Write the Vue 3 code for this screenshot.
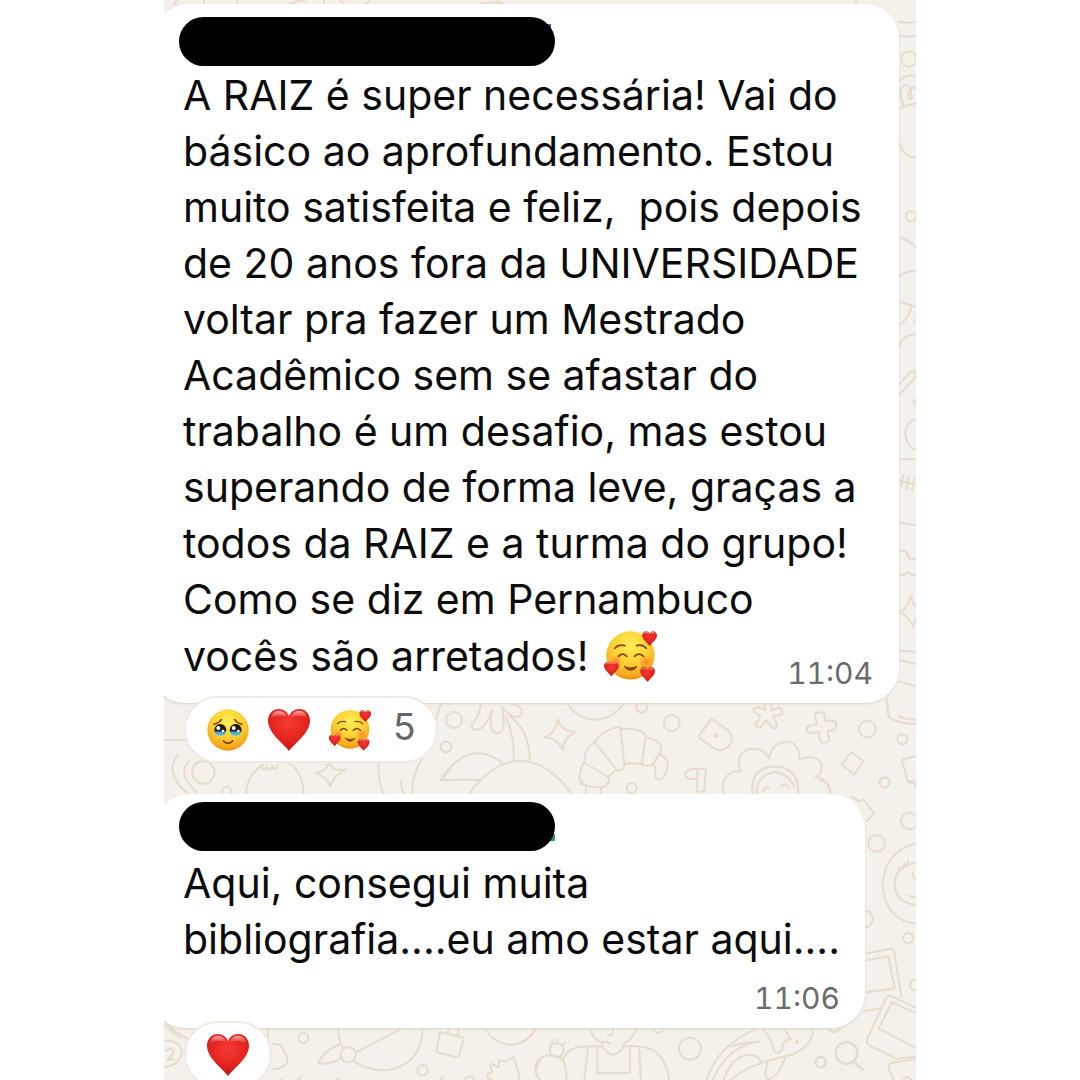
<script setup>
const messages = [
  {
    id: 'raiz',
    accent: 'blue',
    lines: [
      'A RAIZ é super necessária! Vai do',
      'básico ao aprofundamento. Estou',
      'muito satisfeita e feliz,  pois depois',
      'de 20 anos fora da UNIVERSIDADE',
      'voltar pra fazer um Mestrado',
      'Acadêmico sem se afastar do',
      'trabalho é um desafio, mas estou',
      'superando de forma leve, graças a',
      'todos da RAIZ e a turma do grupo!',
      'Como se diz em Pernambuco',
      'vocês são arretados!'
    ],
    ending: 'loved',
    time: '11:04',
    reactions: ['pleading', 'heart', 'loved'],
    count: 5
  },
  {
    id: 'aqui',
    accent: 'green',
    lines: ['Aqui, consegui muita', 'bibliografia....eu amo estar aqui....'],
    time: '11:06',
    reactions: ['heart']
  }
]

const labels = {
  pleading: 'Rosto suplicante',
  heart: 'Coração vermelho',
  loved: 'Rosto sorridente com corações'
}
</script>

<template>
  <div class="page">
    <svg class="defs" aria-hidden="true">
      <defs>
        <radialGradient id="skin" cx="0.5" cy="0.3" r="0.72">
          <stop offset="0" stop-color="#ffee55" />
          <stop offset="0.5" stop-color="#fdd235" />
          <stop offset="0.85" stop-color="#f6a91f" />
          <stop offset="1" stop-color="#e88b12" />
        </radialGradient>
        <radialGradient id="blush">
          <stop offset="0" stop-color="#ff6a2a" stop-opacity="0.65" />
          <stop offset="1" stop-color="#ff6a2a" stop-opacity="0" />
        </radialGradient>
        <radialGradient id="red" cx="0.5" cy="0.35" r="0.7">
          <stop offset="0" stop-color="#f33b35" />
          <stop offset="0.6" stop-color="#e4231e" />
          <stop offset="1" stop-color="#ad1216" />
        </radialGradient>
        <linearGradient id="gloss" x1="0" y1="0" x2="0" y2="1">
          <stop offset="0" stop-color="#fff" stop-opacity="0.6" />
          <stop offset="1" stop-color="#fff" stop-opacity="0" />
        </linearGradient>
        <linearGradient id="iris" x1="0" y1="0" x2="0" y2="1">
          <stop offset="0" stop-color="#1d120c" />
          <stop offset="0.55" stop-color="#24221f" />
          <stop offset="0.7" stop-color="#3f9fd0" />
          <stop offset="1" stop-color="#6fd0f2" />
        </linearGradient>
      </defs>
      <symbol id="heart" viewBox="0 0 132 132">
        <path d="M66 129C52 107 4 78 3 38C3 17 18 3 36 3C50 3 61 12 66 24C71 12 82 3 96 3C114 3 129 17 129 38C128 78 80 107 66 129Z" fill="url(#red)" />
        <path d="M12 31C13 16 23 8 36 8C48 8 56 16 60 27C45 21 26 22 12 31Z" fill="url(#gloss)" />
        <path d="M72 27C76 16 84 8 96 8C109 8 119 16 120 31C106 22 87 21 72 27Z" fill="url(#gloss)" />
      </symbol>
      <symbol id="pleading" viewBox="0 0 132 132">
        <circle cx="66" cy="66" r="62" fill="url(#skin)" />
        <g fill="none" stroke="#8a4a10" stroke-width="5" stroke-linecap="round">
          <path d="M24 49Q39 46 46 35" />
          <path d="M108 49Q93 46 86 35" />
          <path d="M52 99Q66 113 80 99" stroke="#7a3b0a" />
        </g>
        <circle cx="43" cy="66" r="18" fill="url(#iris)" />
        <circle cx="89" cy="66" r="18" fill="url(#iris)" />
        <g fill="#fff">
          <circle cx="37" cy="60" r="6" />
          <circle cx="51" cy="69" r="4" />
          <circle cx="83" cy="60" r="6" />
          <circle cx="97" cy="69" r="4" />
        </g>
      </symbol>
      <symbol id="loved" viewBox="36 32 164 160">
        <circle cx="118" cy="110" r="72" fill="url(#skin)" />
        <circle cx="74" cy="129" r="20" fill="url(#blush)" />
        <circle cx="163" cy="129" r="20" fill="url(#blush)" />
        <g fill="none" stroke="#854514" stroke-width="5" stroke-linecap="round">
          <path d="M71 89Q82 76 101 81" />
          <path d="M165 89Q154 76 136 81" />
          <path d="M82 113Q94 100 107 113" />
          <path d="M130 113Q143 100 157 113" />
          <path d="M100 143Q118 166 137 143Q118 152 100 143Z" fill="#854514" stroke-width="3" />
        </g>
        <use href="#heart" x="152" y="37" width="46" height="46" />
        <use href="#heart" x="38" y="128" width="46" height="46" />
        <use href="#heart" x="146" y="144" width="46" height="46" />
      </symbol>
    </svg>

    <main class="chat">
      <svg class="wallpaper" viewBox="164 0 752 1080" preserveAspectRatio="xMidYMid slice" aria-hidden="true">
        <!-- top strip -->
        <path d="M178 0L174 4M204 0V4M238 0L236 4M290 4Q300 0 304 0M324 0V4M340 0L344 4M366 4L370 0M480 4Q490 1 504 4M496 0L504 4M856 0V4" />

        <!-- right edge, upper -->
        <g transform="translate(840 0) scale(.3333)">
          <path d="M175 65Q205 72 230 64M178 108Q205 113 230 106" />
          <circle cx="207" cy="177" r="23" />
          <path d="M178 242Q205 218 232 230M178 325L230 308M190 318L181 278Q185 245 210 260L216 298Q199 296 207 275Q222 251 232 270M178 430Q190 472 230 473" />
          <circle cx="213" cy="649" r="15" />
          <path d="M178 712Q212 723 230 745M178 829Q195 812 230 812M178 905L230 922M214 920Q207 956 178 974M230 955L222 967M178 1040Q188 1002 230 1003" />
        </g>
        <g transform="translate(840 350) scale(.3333)">
          <path d="M178 103L210 67Q221 59 227 69Q231 76 222 86L178 135M232 145Q218 151 224 165L232 172" />
          <path d="M232 205Q195 216 196 252Q199 292 232 302M178 328H232M178 393L232 406M190 374L183 410M207 380L199 417M224 384L217 420M178 515Q200 525 232 525M178 603Q202 596 207 626Q220 624 232 632M178 672Q193 681 202 667Q215 677 232 674M178 787Q203 778 212 737Q220 764 232 777M178 790Q207 797 219 830Q223 812 232 802M178 902L232 906M178 930L232 944M178 995L232 1010M138 1050L145 1084M178 1100Q200 1110 232 1109" />
        </g>

        <!-- middle band, left -->
        <g transform="translate(160 680) scale(.3333)">
          <path d="M12 50L28 48L46 66M12 180H80M53 226Q28 256 43 291Q58 324 83 339M87 244Q66 265 76 293Q90 320 110 338M258 340Q262 282 310 254M430 340Q430 278 390 252M302 258Q314 277 322 261Q333 281 337 258Q348 278 353 254M466 279Q499 273 508 248Q517 274 556 269M466 279Q497 287 511 318Q519 290 556 269M655 250Q655 306 670 340M724 300Q722 326 733 340M785 238Q754 290 757 340M843 300L872 265M843 300H880" />
          <circle cx="130" cy="277" r="34" />
          <circle cx="200" cy="336" r="15" />
        </g>

        <!-- palm, sparkle and croissant -->
        <g transform="translate(430 690) scale(.3333)">
          <circle cx="72" cy="90" r="24" />
          <circle cx="48" cy="171" r="16" />
          <path d="M32 42L18 90M153 42Q148 80 127 99Q121 121 144 120Q167 113 187 60Q172 128 203 131Q231 126 215 51Q233 75 259 82Q281 78 275 59Q265 42 245 42M227 79Q255 143 251 212M240 80Q299 121 300 214M32 269H151M32 269Q114 144 216 217M118 310Q190 214 270 212Q353 214 424 310M342 142Q377 132 382 87Q394 124 435 126Q401 143 398 180Q383 143 342 142M413 42Q440 83 488 89Q544 91 580 42" />
          <circle cx="635" cy="52" r="16" />
          <circle cx="725" cy="99" r="24" />
          <path d="M468 312V287Q444 274 450 249Q454 228 464 214Q459 182 493 155Q519 121 562 111Q572 109 575 118Q617 111 644 132Q648 139 646 144Q684 145 693 171Q695 184 689 191Q722 213 712 236Q704 263 690 269Q673 267 676 249Q679 232 670 223Q653 231 633 223Q601 216 583 223Q581 239 567 242Q559 233 537 260Q542 278 522 290Q509 293 513 312M493 155L560 238M572 119L583 221M646 144L635 222M689 191L669 222M464 219L535 261M450 281Q500 297 522 290" />
          <circle cx="605" cy="294" r="15" />
        </g>

        <!-- tag, asterisk, cross and flower -->
        <g transform="translate(670 690) scale(.3333)">
          <path d="M88 137L120 91Q126 86 133 92L173 121Q189 135 184 156Q171 181 149 181L137 178L92 147Q86 142 88 137Z" />
          <circle cx="138" cy="137" r="4" />
          <path d="M284 42L285 60L264 51Q248 51 252 65L272 80L257 100Q258 117 272 111L289 91L306 113Q322 118 321 103L309 80L334 73Q342 60 328 53L304 61L305 42M437 70L456 67Q463 69 463 77L465 93L490 92Q501 96 499 110L492 119L473 122L478 149Q475 159 455 157Q448 154 448 145L446 125L419 130Q408 125 411 113L419 107L441 103L434 79ZM544 186L580 214L553 253L514 225ZM652 25Q651 60 657 82Q690 103 740 101M740 197L696 210L714 277L728 273L738 291" />
          <circle cx="592" cy="117" r="25" />
          <circle cx="697" cy="148" r="15" />
          <circle cx="644" cy="277" r="15" />
          <path d="M102 237H66Q44 241 46 256Q50 270 80 266M83 240L80 305H102L108 235M161 310Q151 280 175 254Q190 241 213 245Q194 201 230 179Q276 167 298 205Q302 158 354 155Q389 161 389 209Q429 191 452 216Q464 245 437 262Q473 263 481 310M248 310Q239 244 299 230Q371 223 384 285V310M260 310Q260 253 315 246Q356 250 373 291M280 303Q281 290 298 292M336 287Q348 278 355 292" />
        </g>

        <!-- right edge, lower: portrait and photos -->
        <g transform="translate(820 780) scale(.3333)">
          <path d="M0 0Q30 5 32 38M95 50Q110 57 115 66M115 65L129 58L163 99L140 124M290 188Q195 214 187 315Q195 419 290 432M290 248Q226 256 224 314Q228 369 290 375M235 262Q249 278 252 250Q262 269 265 241M278 280Q283 301 290 298M267 347Q277 354 290 350M140 520L213 506Q221 506 223 517L244 650M140 541L205 529L224 625L140 637M134 694L181 685M290 685L213 647Q204 644 199 653L141 779Q137 789 149 797L230 836L290 830M290 700L216 667L176 746L290 805M290 836L212 849Q203 855 207 868L220 900M250 900Q260 882 274 900M102 845L129 870M28 746Q42 765 58 747M262 0Q270 14 280 3L290 14" />
          <circle cx="194" cy="7" r="15" />
          <circle cx="170" cy="190" r="25" />
          <circle cx="268" cy="123" r="25" />
          <circle cx="135" cy="417" r="24" />
          <circle cx="265" cy="474" r="15" />
          <circle cx="286" cy="615" r="16" />
          <circle cx="79" cy="819" r="32" />
          <circle cx="2" cy="846" r="16" />
        </g>

        <!-- bottom band, left -->
        <g transform="translate(160 1000) scale(.3333)">
          <path d="M12 62L39 89L80 116M12 76L62 115M12 121Q57 121 66 154Q61 194 12 202M20 153Q35 138 40 151Q41 163 23 180L42 178M324 88V116M340 132Q369 130 370 154Q386 165 381 188Q366 209 340 207M535 88Q534 119 548 141M720 88L587 158M788 88Q785 193 684 210Q624 214 580 182M541 132Q488 153 475 190Q515 195 545 173M839 97Q875 103 908 112Q913 116 910 121L898 166Q895 173 887 171L834 158Q828 154 831 147ZM864 98L865 88M894 107L895 88M977 88Q1006 134 1056 135Q1104 129 1125 88M995 240Q980 236 984 222L998 216Q988 199 993 191L1016 203L1018 179L1037 185L1061 172L1079 228L1073 240M1140 182Q1124 202 1130 225L1140 240M360 240L366 235M414 240L422 231M530 240L536 236M838 240L850 232M915 237Q928 220 941 237" />
          <circle cx="565" cy="164" r="23" />
          <circle cx="430" cy="114" r="15" />
          <circle cx="788" cy="211" r="15" />
        </g>

        <!-- bottom band, right: gardener, koi and magnifier -->
        <g transform="translate(530 1000) scale(.3333)">
          <path d="M0 110Q12 102 12 88M180 88Q191 119 215 127Q219 153 245 165Q276 161 283 129Q306 123 318 88M248 88Q252 108 235 105M212 127Q230 122 239 130M215 140Q158 136 130 146Q105 158 99 180M283 139Q350 135 378 157Q413 187 417 240M174 143L163 240M327 143L333 240M202 146V219H300V142M29 240Q6 201 26 180Q58 154 93 176Q111 191 109 240M62 133L68 120M80 129L81 119M96 134L107 128M370 90Q385 107 400 90M530 240Q560 140 675 88M548 240Q595 133 690 125Q641 126 607 138M580 240Q607 168 656 165Q689 163 693 187M700 88Q725 116 730 148Q744 170 757 147Q755 122 782 118Q774 100 764 88M848 88Q850 137 784 165Q656 190 603 240M766 169Q748 231 716 238Q700 229 712 189M894 88Q911 103 930 88M970 183L998 210" />
          <circle cx="80" cy="150" r="21" />
          <circle cx="480" cy="146" r="33" />
          <circle cx="801" cy="126" r="3" />
          <circle cx="872" cy="187" r="15" />
          <circle cx="950" cy="159" r="33" />
        </g>
      </svg>

      <article v-for="m in messages" :key="m.id" class="message" :class="m.id">
        <div class="bubble">
          <div class="sender" :class="m.accent"></div>
          <p class="text">
            <span v-for="(line, i) in m.lines" :key="i" class="line">{{ line }}<svg
              v-if="m.ending && i === m.lines.length - 1" class="inline-emoji" role="img" :aria-label="labels[m.ending]"
            ><use :href="'#' + m.ending" /></svg></span>
          </p>
          <time class="time">{{ m.time }}</time>
        </div>
        <button type="button" class="reactions">
          <svg v-for="r in m.reactions" :key="r" class="emoji" role="img" :aria-label="labels[r]"><use :href="'#' + r" /></svg>
          <span v-if="m.count" class="count">{{ m.count }}</span>
        </button>
      </article>
    </main>
  </div>
</template>

<style>
body {
  margin: 0;
  background: #fff;
}
</style>

<style scoped>
.page {
  display: grid;
  grid-template-columns: 41fr minmax(0, 188fr) 41fr;
  height: 100vh;
  font-family: Inter, "Liberation Sans", sans-serif;
}

.defs {
  position: absolute;
  width: 0;
  height: 0;
}

.chat {
  grid-column: 2;
  position: relative;
  box-sizing: border-box;
  display: flex;
  flex-direction: column;
  gap: 31px;
  padding-top: 4px;
  overflow: hidden;
  background: #f4f0ea;
}

.wallpaper {
  position: absolute;
  inset: 0;
  width: 100%;
  height: 100%;
  fill: none;
  stroke: #e7dbcd;
  stroke-width: 2px;
  stroke-linecap: round;
  stroke-linejoin: round;
}

.wallpaper g {
  stroke-width: 6px;
}

.message {
  position: relative;
  display: flex;
  flex-direction: column;
  align-items: flex-start;
}

.bubble {
  isolation: isolate;
  align-self: stretch;
  display: grid;
  margin: 0 17px 0 -9px;
  padding: 13px 26px 18px 24px;
  border-radius: 34px 34px 34px 28px;
  background: #fff;
  box-shadow: 0 1px 2px #d8d2c9;
}

.aqui .bubble {
  margin-right: 51px;
  padding-top: 8px;
}

.sender {
  position: relative;
  width: 376px;
  height: 49px;
  border-radius: 25px;
  background: #000;
}

.sender::before {
  content: "";
  position: absolute;
  z-index: -1;
  right: 4px;
  top: 7px;
  width: 6px;
  height: 5px;
  background: #5a48d6;
}

.sender.green::before {
  right: 0;
  top: 32px;
  height: 7px;
  background: #239a6b;
}

.text {
  grid-area: 2 / 1;
  margin: 1px 0 0 4px;
  color: #0b0b0b;
  font-size: 41px;
  line-height: 56px;
  white-space: pre;
}

.aqui .text {
  margin-top: 4px;
}

.line {
  display: flex;
  align-items: center;
  gap: 14px;
}

.inline-emoji {
  width: 55px;
  height: 58px;
}

.time {
  grid-area: 2 / 1;
  place-self: end;
  color: #6b6b6b;
  font-size: 30px;
  font-variant-numeric: tabular-nums;
  line-height: 24px;
}

.aqui .time {
  grid-row: 3;
  margin-top: 19px;
}

.reactions {
  position: relative;
  box-sizing: border-box;
  display: flex;
  align-items: center;
  gap: 17px;
  height: 67px;
  margin: -7px 0 0 20px;
  padding: 0 20px;
  border: 2px solid #efeae3;
  border-radius: 34px;
  background: #fff;
  font: inherit;
}

.emoji {
  width: 44px;
  height: 44px;
}

.count {
  margin-left: 4px;
  padding-bottom: 6px;
  color: #666;
  font-size: 37px;
  line-height: 44px;
}
</style>
